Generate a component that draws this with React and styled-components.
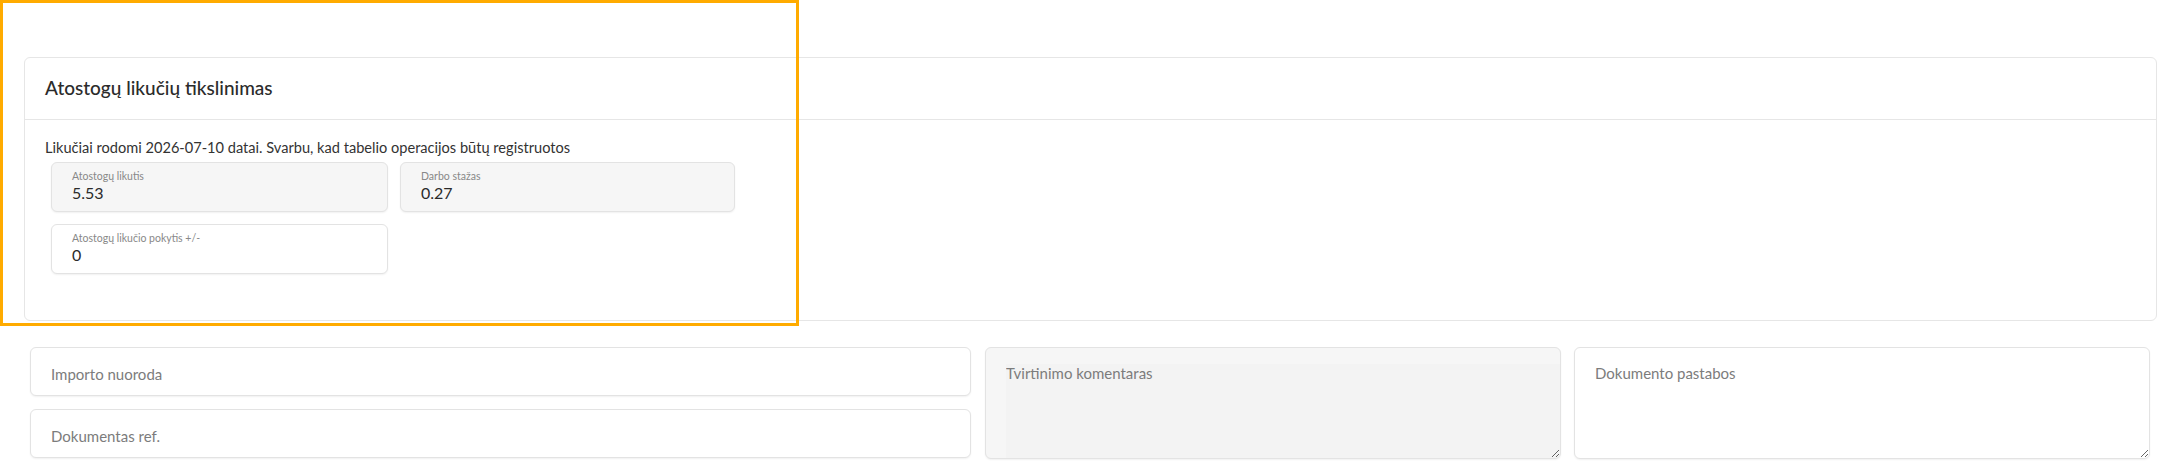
import React from "react";
import styled, { createGlobalStyle } from "styled-components";

const GlobalStyle = createGlobalStyle`
  body {
    margin: 0;
    background: #fff;
    font-family: "Lato", "Liberation Sans", sans-serif;
    color: #333;
  }
  * { box-sizing: border-box; }
`;

const Page = styled.div`
  position: relative;
  padding: 57px 16px 15px 24px;
`;

const Highlight = styled.div`
  position: absolute;
  top: 0;
  left: 0;
  width: 799px;
  height: 326px;
  border: 3px solid #ffab00;
  pointer-events: none;
`;

const Card = styled.section`
  border: 1px solid #e6e6e6;
  border-radius: 6px;
  background: #fff;
`;

const CardHeader = styled.div`
  height: 62px;
  display: flex;
  align-items: center;
  padding: 0 20px 2px;
  border-bottom: 1px solid #e6e6e6;
`;

const Title = styled.h3`
  margin: 0;
  font-size: 19px;
  font-weight: 500;
  color: #2b2b2b;
`;

const CardBody = styled.div`
  padding: 18px 20px 46px;
`;

const Info = styled.p`
  margin: 0 0 4px;
  font-size: 14.6px;
  line-height: 20px;
  color: #333;
`;

const FieldGrid = styled.div`
  display: grid;
  grid-template-columns: 337px 335px;
  gap: 12px;
  margin-left: 6px;
`;

const Field = styled.div`
  height: 50px;
  padding: 7px 20px 0;
  border: 1px solid #e3e3e3;
  border-radius: 6px;
  background: ${(p) => (p.$readOnly ? "#f6f6f6" : "#fff")};
  box-shadow: 0 1px 2px rgba(0, 0, 0, 0.06);
`;

const FieldLabel = styled.div`
  font-size: 10.5px;
  line-height: 13px;
  color: #888;
`;

const FieldValue = styled.div`
  font-size: 16px;
  line-height: 20px;
  color: #2b2b2b;
`;

const Extras = styled.div`
  display: flex;
  gap: 13px;
  margin: 26px 0 0 6px;
`;

const InputColumn = styled.div`
  width: 941px;
  display: flex;
  flex-direction: column;
  gap: 13px;
  margin-right: 1px;
`;

const TextInput = styled.input`
  height: 49px;
  width: 100%;
  padding: 4px 20px 0;
  border: 1px solid #e3e3e3;
  border-radius: 6px;
  background: #fff;
  box-shadow: 0 1px 2px rgba(0, 0, 0, 0.06);
  font-family: inherit;
  font-size: 15px;
  color: #333;
  outline: none;

  &::placeholder {
    color: #7c7c7c;
  }
`;

const AreaBox = styled.div`
  width: 576px;
  height: 112px;
  display: flex;
  padding: 16px 0 0 20px;
  border: 1px solid #e3e3e3;
  border-radius: 6px;
  overflow: hidden;
  background: ${(p) => (p.$disabled ? "#f6f6f6" : "#fff")};
  box-shadow: 0 1px 2px rgba(0, 0, 0, 0.06);
`;

const Area = styled.textarea`
  flex: 1;
  margin: 0;
  padding: 0;
  border: none;
  outline: none;
  resize: both;
  background: ${(p) => (p.disabled ? "#f3f3f3" : "#fff")};
  font-family: inherit;
  font-size: 15px;
  line-height: 18px;
  color: #333;

  &::placeholder {
    color: #7c7c7c;
  }
`;

const fields = [
  { label: "Atostogų likutis", value: "5.53", readOnly: true },
  { label: "Darbo stažas", value: "0.27", readOnly: true },
  { label: "Atostogų likučio pokytis +/-", value: "0", readOnly: false },
];

export default function App() {
  return (
    <Page>
      <GlobalStyle />
      <Card>
        <CardHeader>
          <Title>Atostogų likučių tikslinimas</Title>
        </CardHeader>
        <CardBody>
          <Info>
            Likučiai rodomi 2026-07-10 datai. Svarbu, kad tabelio operacijos būtų registruotos
          </Info>
          <FieldGrid>
            {fields.map((f) => (
              <Field key={f.label} $readOnly={f.readOnly}>
                <FieldLabel>{f.label}</FieldLabel>
                <FieldValue>{f.value}</FieldValue>
              </Field>
            ))}
          </FieldGrid>
        </CardBody>
      </Card>

      <Extras>
        <InputColumn>
          <TextInput placeholder="Importo nuoroda" />
          <TextInput placeholder="Dokumentas ref." />
        </InputColumn>
        <AreaBox $disabled>
          <Area disabled placeholder="Tvirtinimo komentaras" />
        </AreaBox>
        <AreaBox>
          <Area placeholder="Dokumento pastabos" />
        </AreaBox>
      </Extras>

      <Highlight />
    </Page>
  );
}
